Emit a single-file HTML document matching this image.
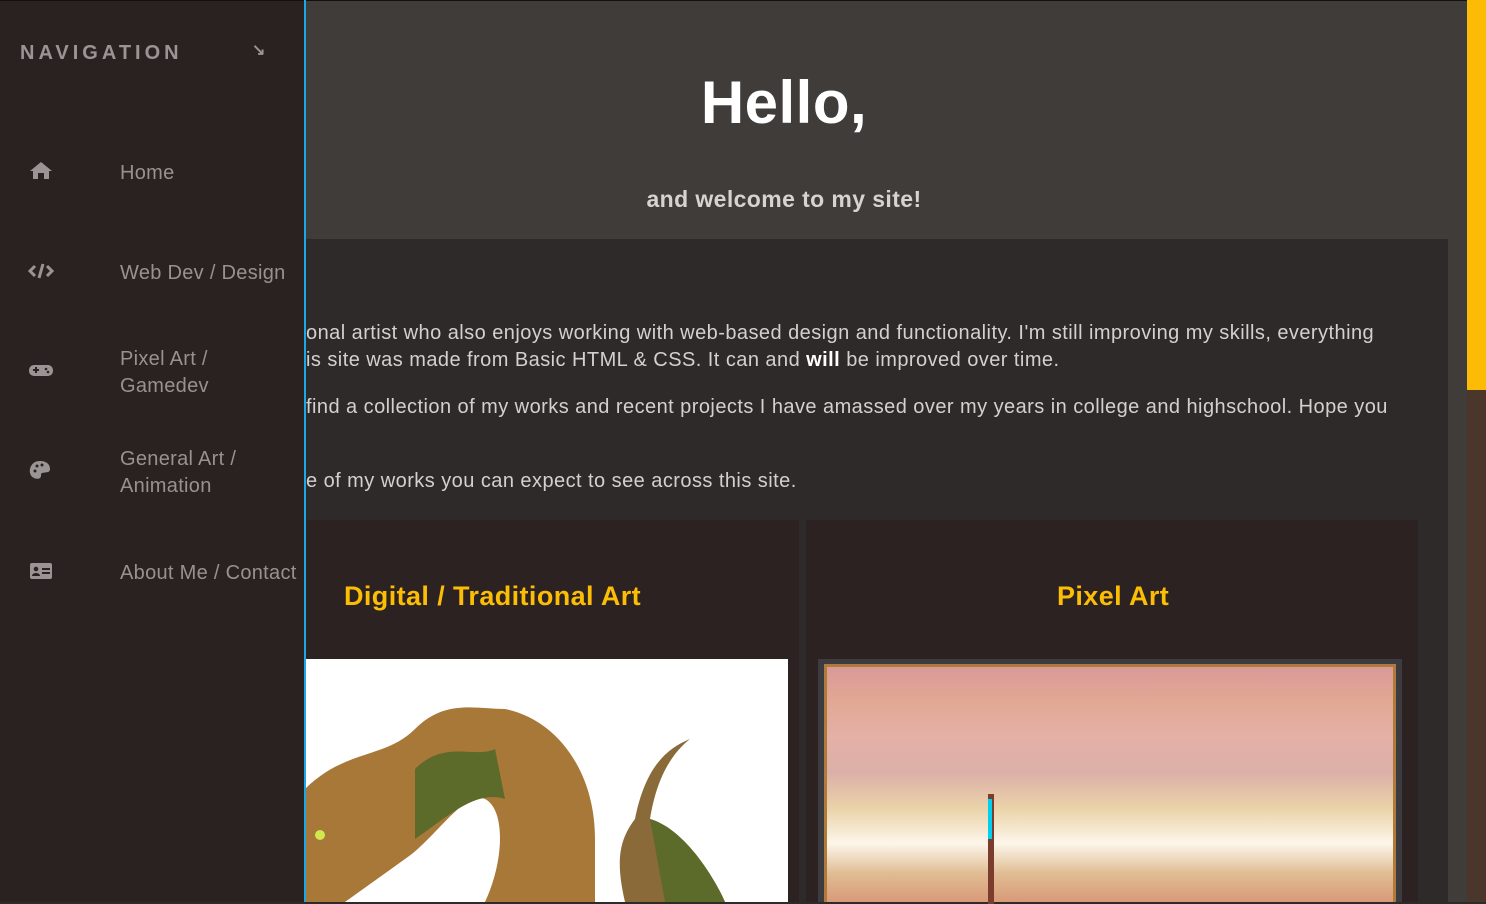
<!DOCTYPE html>
<html><head><meta charset="utf-8"><style>
*{margin:0;padding:0;box-sizing:border-box}
body{width:1486px;height:902px;overflow:hidden;background:#2e2a29;font-family:"Liberation Sans",sans-serif;position:relative}
.hdr{position:absolute;left:0;top:0;width:1467px;height:239px;background:#3f3c39;border-top:1px solid #111}
.side2{position:absolute;left:1448px;top:239px;width:19px;height:663px;background:#3f3c39}
.sb{position:absolute;left:1467px;top:0;width:19px;height:902px;background:#4a362a}
.thumb{position:absolute;left:1467px;top:0;width:19px;height:390px;background:#fcbc05}
h1{position:absolute;left:305px;width:958px;top:68px;text-align:center;color:#fff;font-size:60px;font-weight:bold;letter-spacing:0.5px}
.sub{position:absolute;left:305px;width:958px;top:186px;text-align:center;color:#d6d3d0;font-size:23px;font-weight:bold;letter-spacing:0.4px}
.p{position:absolute;left:306px;color:#d5d0ce;font-size:20px;white-space:nowrap;letter-spacing:0.45px}
.card{position:absolute;top:520px;height:382px;background:#2c2221}
.ct{position:absolute;color:#fbbd05;font-size:27px;font-weight:bold;letter-spacing:0.4px}
.nav{position:absolute;left:0;top:0;width:304px;height:902px;background:#2a2221;border-top:1px solid #111}
.bl{position:absolute;left:304px;top:0;width:2px;height:902px;background:#1ea7e6}
.nt{position:absolute;left:20px;top:42px;color:#9a9594;font-size:20px;font-weight:bold;letter-spacing:4px}
.it{position:absolute;left:120px;color:#979290;font-size:20px;line-height:27px;letter-spacing:0.3px}
.ic{position:absolute;left:28px;width:26px;height:20px}
</style></head><body>
<div class="hdr"></div><div class="side2"></div>
<div class="sb"></div><div class="thumb"></div>
<h1>Hello,</h1>
<div class="sub">and welcome to my site!</div>
<div class="p" style="top:322px">onal artist who also enjoys working with web-based design and functionality. I'm still improving my skills, everything</div>
<div class="p" style="top:349px">is site was made from Basic HTML &amp; CSS. It can and <b style="color:#fff">will</b> be improved over time.</div>
<div class="p" style="top:396px">find a collection of my works and recent projects I have amassed over my years in college and highschool. Hope you</div>
<div class="p" style="top:470px">e of my works you can expect to see across this site.</div>
<div class="card" style="left:305px;width:494px"><div class="ct" style="left:39px;top:61px">Digital / Traditional Art</div>
<div style="position:absolute;left:0;top:139px;width:483px;height:243px;background:#fff;overflow:hidden">
<svg width="483" height="243"><path d="M0 130 C40 90 80 100 110 70 C140 40 170 50 200 50 C250 60 290 110 290 180 L290 243 L180 243 C200 200 200 150 180 140 C160 130 130 180 100 200 L40 243 L0 243Z" fill="#a87838"/><path d="M110 110 C140 80 170 100 190 90 L200 140 C170 130 140 160 110 180Z" fill="#5c6a2a"/><circle cx="15" cy="176" r="5" fill="#cfe84a"/><path d="M330 160 C340 110 360 90 385 80 C360 100 350 130 345 160 C380 170 410 220 420 243 L320 243 C310 200 315 180 330 160Z" fill="#8a6a38"/><path d="M345 160 C380 170 410 220 420 243 L360 243Z" fill="#5c6a2a"/></svg></div></div>
<div class="card" style="left:806px;width:612px"><div class="ct" style="left:251px;top:61px">Pixel Art</div>
<div style="position:absolute;left:12px;top:139px;width:584px;height:243px;background:#3b3b40;padding:5px 6px 0 6px">
<div style="width:100%;height:100%;border:3px solid #b07a3a;border-bottom:none;background:linear-gradient(180deg,#d99a98 0%,#e2a894 15%,#e4b0a8 30%,#dcb0a8 45%,#ead2a8 60%,#fcf6ea 75%,#e0bc92 88%,#d99a78 100%)">
<div style="position:absolute;left:170px;top:135px;width:6px;height:110px;background:#7a3c2c"></div>
<div style="position:absolute;left:170px;top:140px;width:4px;height:40px;background:#00d0f0"></div>
</div></div></div>
<div class="nav"></div><div class="bl"></div>
<div class="nt">NAVIGATION</div>
<div style="position:absolute;left:252px;top:40px;color:#9a9594;font-size:16px;font-weight:bold">↘</div>
<svg class="ic" style="top:160px" viewBox="0 0 26 20"><path d="M13 2 L24 11 L21 11 L21 19 L16 19 L16 13 L10 13 L10 19 L5 19 L5 11 L2 11Z" fill="#9a9594"/></svg>
<div class="it" style="top:160px">Home</div>
<svg class="ic" style="top:261px" viewBox="0 0 26 20"><path d="M7 5 L2 10 L7 15 M19 5 L24 10 L19 15 M15 3 L11 17" stroke="#9a9594" stroke-width="3" fill="none"/></svg>
<div class="it" style="top:260px">Web Dev / Design</div>
<svg class="ic" style="top:360px" viewBox="0 0 26 20"><rect x="1" y="5" width="24" height="11" rx="5" fill="#9a9594"/><rect x="5" y="9" width="6" height="2" fill="#2a2221"/><rect x="7" y="7" width="2" height="6" fill="#2a2221"/><circle cx="18" cy="9" r="1.3" fill="#2a2221"/><circle cx="20" cy="12" r="1.3" fill="#2a2221"/></svg>
<div class="it" style="top:346px">Pixel Art /<br>Gamedev</div>
<svg class="ic" style="top:460px" viewBox="0 0 26 20"><path d="M12 1 C4 1 1 8 2 13 C3 18 9 20 12 18 C14 16 12 14 14 13 C18 12 22 13 22 9 C22 4 18 1 12 1Z" fill="#9a9594"/><circle cx="7" cy="11" r="1.5" fill="#2a2221"/><circle cx="9" cy="6" r="1.5" fill="#2a2221"/><circle cx="14" cy="5" r="1.5" fill="#2a2221"/></svg>
<div class="it" style="top:446px">General Art /<br>Animation</div>
<svg class="ic" style="top:561px" viewBox="0 0 26 20"><rect x="2" y="2" width="22" height="16" rx="2" fill="#9a9594"/><circle cx="8" cy="8" r="2.3" fill="#2a2221"/><path d="M4 15 C4 11 12 11 12 15Z" fill="#2a2221"/><rect x="14" y="7" width="8" height="2" fill="#2a2221"/><rect x="14" y="11" width="8" height="2" fill="#2a2221"/></svg>
<div class="it" style="top:560px">About Me / Contact</div>
</body></html>
